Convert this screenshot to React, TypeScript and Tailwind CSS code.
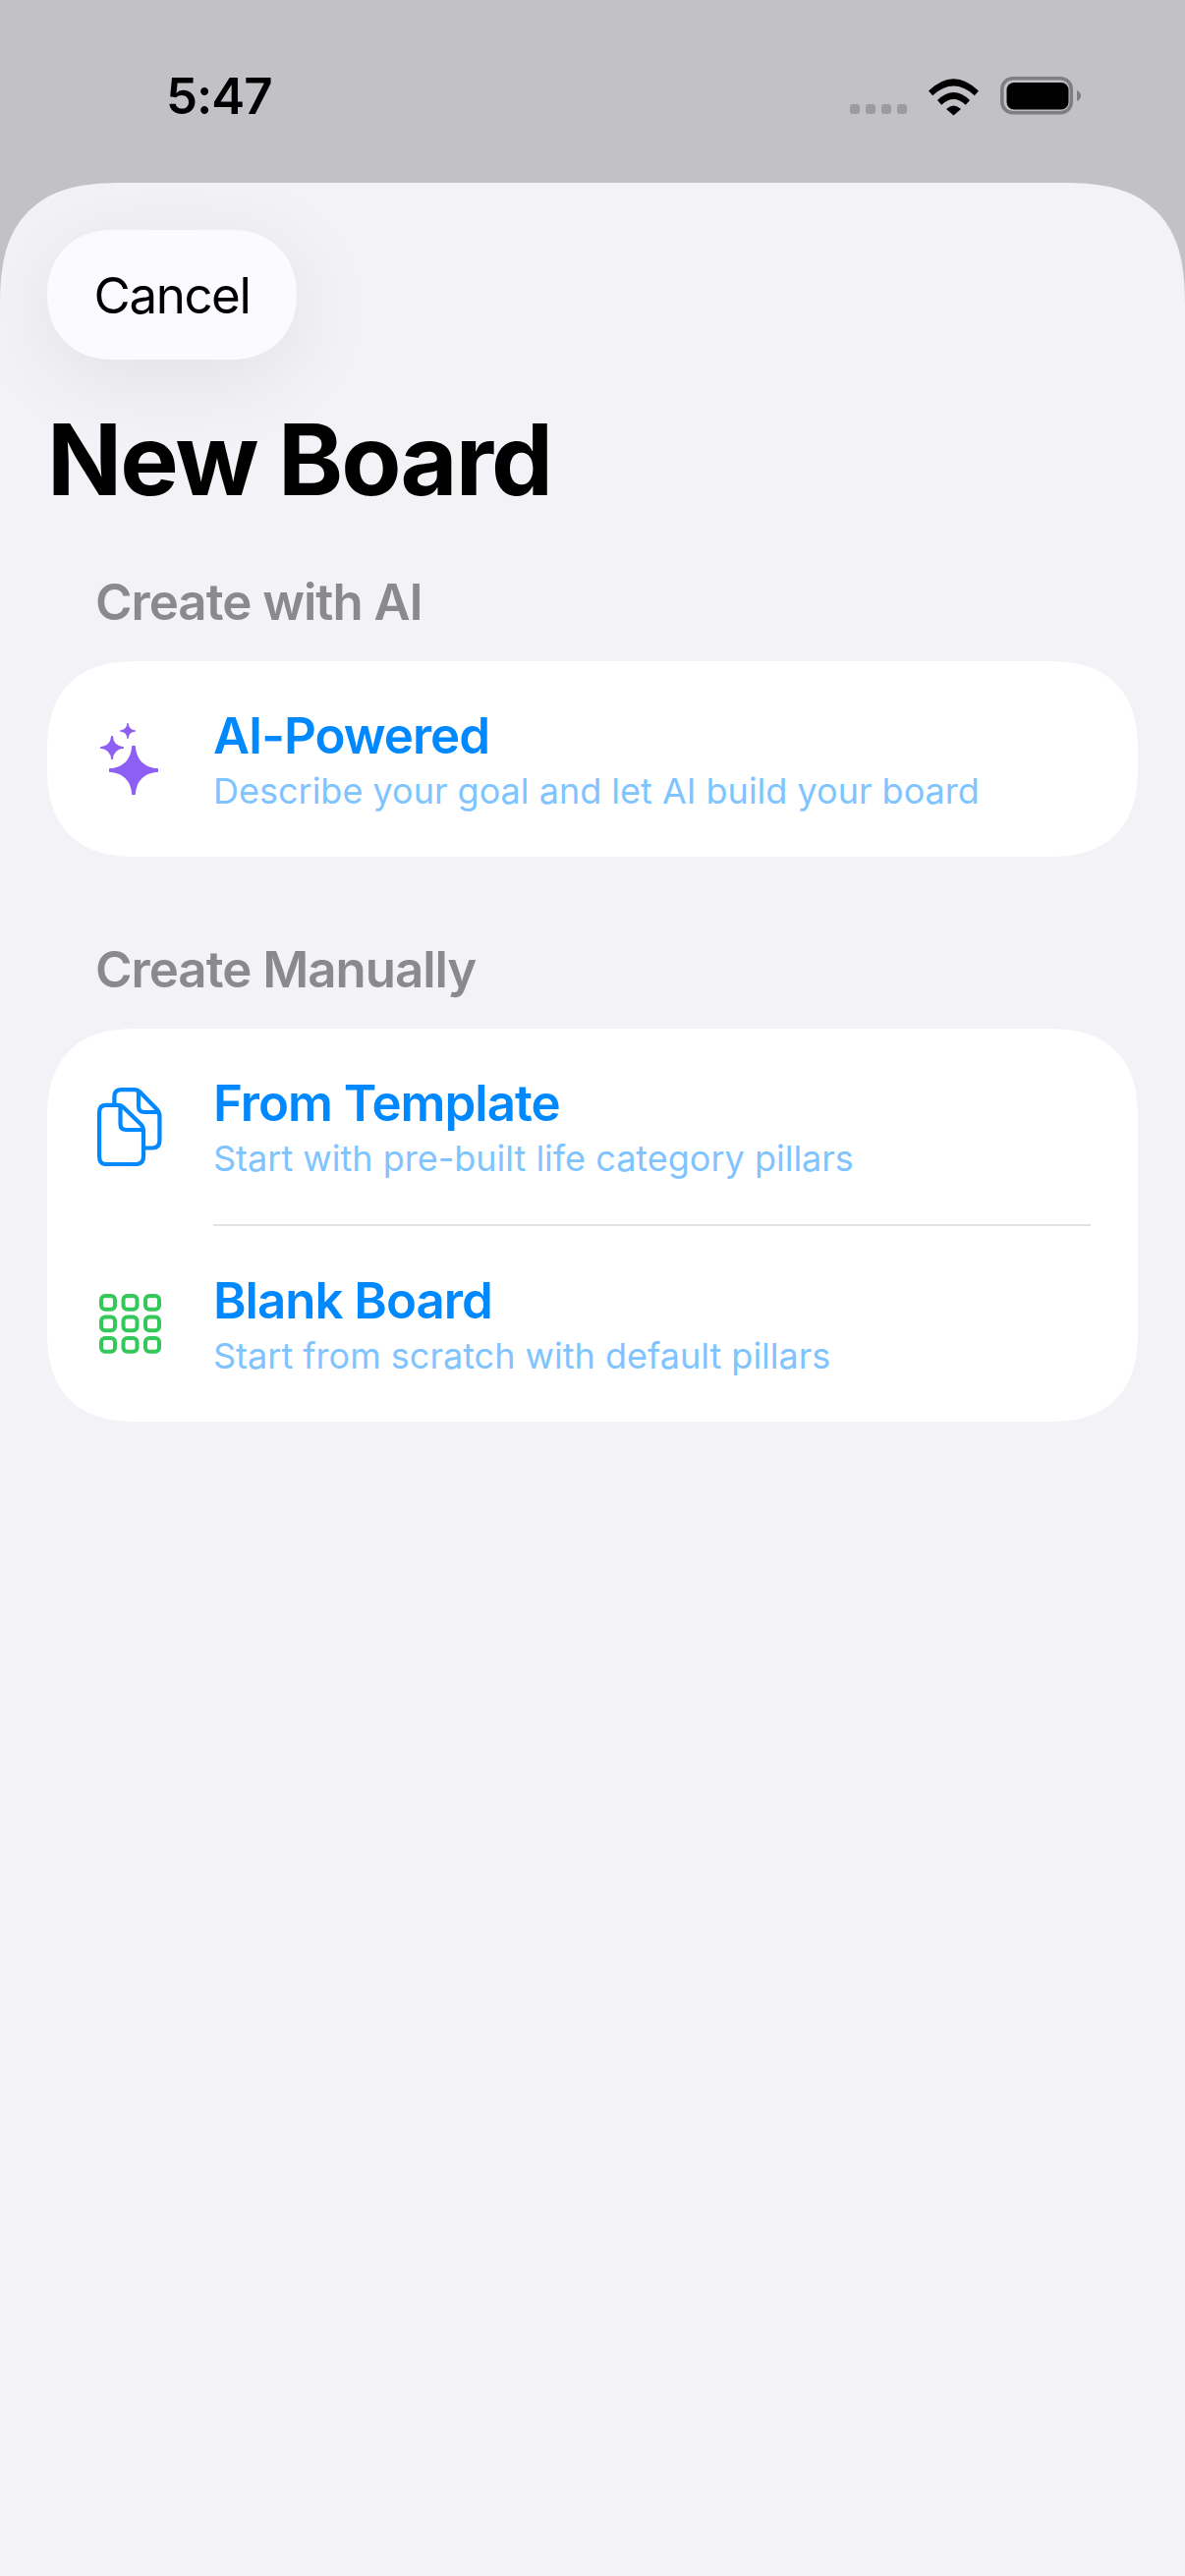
const font = { fontFamily: "Inter, 'Noto Sans', sans-serif" };

function StatusIcons() {
	return (
		<svg width="236" height="40" viewBox="0 0 236 40" fill="none">
			{[0, 16, 32, 48].map((x) => (
				<rect key={x} x={x} y="28" width="10" height="10" rx="3" fill="#9b9b9e" />
			))}
			<path d="M80 14.5 Q105.500 -10 131 14.500 L126.800 19.200 Q105.500 0 84.200 19.200 Z" fill="#000" />
			<path d="M89 24 Q105.500 8 122 24 L117.800 28.700 Q105.500 17.500 93.200 28.700 Z" fill="#000" />
			<path d="M98 33 Q105.500 26 113 33 L105.500 39.500 Z" fill="#000" />
			<rect x="154.800" y="1.800" width="70.500" height="35" rx="11" stroke="#7f7f82" strokeWidth="3.500" />
			<rect x="159.500" y="6" width="63" height="27.500" rx="7.500" fill="#000" />
			<path d="M231 14 Q235 16 235 19.500 Q235 23 231 25 Z" fill="#7f7f82" />
		</svg>
	);
}

function Star({ cx, cy, r }: { cx: number; cy: number; r: number }) {
	const k = r * 0.13;
	const tip = r * 0.07;
	return (
		<path
			d={`M${cx - tip} ${cy - r} L${cx + tip} ${cy - r} Q${cx + k} ${cy - k} ${cx + r} ${cy - tip} L${cx + r} ${cy + tip} Q${cx + k} ${cy + k} ${cx + tip} ${cy + r} L${cx - tip} ${cy + r} Q${cx - k} ${cy + k} ${cx - r} ${cy + tip} L${cx - r} ${cy - tip} Q${cx - k} ${cy - k} ${cx - tip} ${cy - r} Z`}
			fill="#8e5ff5"
		/>
	);
}

function SparkleIcon() {
	return (
		<svg width="60" height="74" viewBox="0 0 60 74">
			<Star cx={34} cy={48} r={25} />
			<Star cx={12} cy={25} r={12} />
			<Star cx={28} cy={8} r={8} />
		</svg>
	);
}

function DocsIcon() {
	return (
		<svg width="66" height="80" viewBox="0 0 66 80" fill="none" stroke="#0088ff" strokeWidth="4.200" strokeLinejoin="round">
			<path d="M17.400 16 V9 Q17.400 2.100 25 2.100 H38 Q41 2.100 43.500 4.500 L60.500 22 Q63.400 25 63.400 29 V54 Q63.400 61.500 56 61.500 H48" />
			<path d="M42 2.500 V19 Q42 25 48 25 H63" />
			<path d="M9 17.800 H21 Q24.500 17.800 27 20.500 L44 37 Q47 40 47 44 V70 Q47 78 39 78 H9 Q2.100 78 2.100 70 V25 Q2.100 17.800 9 17.800 Z" />
			<path d="M23.500 18 V37 Q23.500 43 29.500 43 H46.500" />
		</svg>
	);
}

function GridIcon() {
	const xs = [2, 24.500, 47];
	const ys = [2, 23.500, 45];
	return (
		<svg width="63" height="61" viewBox="0 0 63 61" fill="none" stroke="#34c759" strokeWidth="4">
			{ys.map((y) => xs.map((x) => <rect key={`${x}-${y}`} x={x} y={y} width="14" height="13.700" rx="4" />))}
		</svg>
	);
}

function Row({ icon, title, subtitle }: { icon: React.ReactNode; title: string; subtitle: string }) {
	return (
		<div className="flex h-[199px] items-center pl-[48px]">
			<div className="flex w-[72px] items-center justify-center">{icon}</div>
			<div className="ml-[49px] flex flex-col pt-[3px]">
				<span className="text-[51px] leading-[62px] font-semibold tracking-[-1px] text-[#0088ff]">{title}</span>
				<span className="text-[36px] leading-[50px] text-[#80c4ff]">{subtitle}</span>
			</div>
		</div>
	);
}

function Section({ label, children }: { label: string; children: React.ReactNode }) {
	return (
		<section>
			<h2 className="pl-[49px] text-[51px] leading-[60px] font-semibold tracking-[-1px] text-[#8a8a8e]">{label}</h2>
			<div className="mt-[30px] overflow-hidden rounded-[92px] bg-white [corner-shape:superellipse(1.3)]">{children}</div>
		</section>
	);
}

export default function App() {
	return (
		<div className="flex h-[2622px] w-[1206px] flex-col overflow-hidden bg-[#c2c1c6] text-black" style={font}>
			<header className="flex h-[186px] shrink-0 items-start justify-between pr-[105px] pl-[169px] pt-[68px]">
				<span className="text-[51px] leading-[60px] font-semibold tracking-[-1px]">5:47</span>
				<div className="mt-[10px]">
					<StatusIcons />
				</div>
			</header>
			<main className="flex-1 overflow-hidden rounded-t-[126px] bg-[#f2f2f7] px-[48px] pt-[48px] [corner-shape:superellipse(1.4)]">
				<button className="h-[132px] w-[254px] rounded-[66px] bg-[#fbfbff] pt-[2px] text-[51px] tracking-[-1.4px] shadow-[0_16px_90px_rgba(0,0,0,0.08)] [corner-shape:superellipse(1.1)]">
					Cancel
				</button>
				<h1 className="mt-[40px] text-[100px] leading-[124px] font-bold tracking-[-2px]">New Board</h1>
				<div className="mt-[53px] flex flex-col gap-[85px]">
					<Section label="Create with AI">
						<Row
							icon={<SparkleIcon />}
							title="AI-Powered"
							subtitle="Describe your goal and let AI build your board"
						/>
					</Section>
					<Section label="Create Manually">
						<Row
							icon={<DocsIcon />}
							title="From Template"
							subtitle="Start with pre-built life category pillars"
						/>
						<div className="mr-[48px] ml-[169px] h-[2px] bg-[#e3e3e6]" />
						<Row
							icon={<GridIcon />}
							title="Blank Board"
							subtitle="Start from scratch with default pillars"
						/>
					</Section>
				</div>
			</main>
		</div>
	);
}
